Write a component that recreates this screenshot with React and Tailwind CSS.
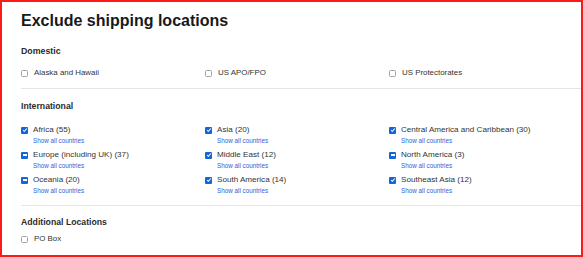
const domestic = ['Alaska and Hawaii', 'US APO/FPO', 'US Protectorates'];

const international = [
  { name: 'Africa (55)', state: 'checked' },
  { name: 'Asia (20)', state: 'checked' },
  { name: 'Central America and Caribbean (30)', state: 'checked' },
  { name: 'Europe (including UK) (37)', state: 'mixed' },
  { name: 'Middle East (12)', state: 'checked' },
  { name: 'North America (3)', state: 'mixed' },
  { name: 'Oceania (20)', state: 'mixed' },
  { name: 'South America (14)', state: 'checked' },
  { name: 'Southeast Asia (12)', state: 'checked' },
];

function Box({ state }) {
  if (state === 'checked') {
    return (
      <span className="w-[7px] h-[7px] rounded-[1px] bg-[#1466d8] flex items-center justify-center shrink-0">
        <svg viewBox="0 0 8 8" className="w-[6px] h-[6px]">
          <path d="M1.5 4.2 L3.2 5.8 L6.5 2" fill="none" stroke="#fff" strokeWidth="1.4" />
        </svg>
      </span>
    );
  }
  if (state === 'mixed') {
    return (
      <span className="w-[7px] h-[7px] rounded-[1px] bg-[#1466d8] flex items-center justify-center shrink-0">
        <span className="w-[4px] h-[1.5px] bg-white" />
      </span>
    );
  }
  return <span className="w-[7px] h-[7px] rounded-[1.5px] border border-[#a3a3a3] bg-white shrink-0" />;
}

export default function App() {
  return (
    <div
      className="w-[583px] h-[257px] border-2 border-[#ff1a1a] overflow-hidden bg-white pl-[19px] text-[#333]"
      style={{ fontFamily: '"Liberation Sans", Arial, sans-serif' }}
    >
      <h1 className="mt-[9px] h-[20px] leading-[20px] text-[16px] font-bold text-[#191919]">
        Exclude shipping locations
      </h1>

      {/* Domestic */}
      <h2 className="mt-[13px] h-[14px] leading-[14px] text-[8.8px] font-bold text-[#2b2b2b]">Domestic</h2>
      <div className="mt-[9px] grid grid-cols-[184px_184px_184px]">
        {domestic.map(name => (
          <label key={name} className="h-[12px] flex items-center gap-[6px] text-[7.9px]">
            <Box state="empty" />
            <span>{name}</span>
          </label>
        ))}
      </div>
      <div className="mt-[9px] border-t border-[#e5e5e5]" />

      {/* International */}
      <h2 className="mt-[10px] h-[14px] leading-[14px] text-[8.7px] font-bold text-[#2b2b2b]">International</h2>
      <div className="mt-[11px] grid grid-cols-[184px_184px_184px] gap-y-[4px]">
        {international.map(item => (
          <div key={item.name} className="flex flex-col">
            <label className="h-[12px] flex items-center gap-[5px] text-[8.1px]">
              <Box state={item.state} />
              <span>{item.name}</span>
            </label>
            <a className="h-[9px] leading-[9px] ml-[12px] text-[6.3px] text-[#2f5fd6]">Show all countries</a>
          </div>
        ))}
      </div>
      <div className="mt-[10px] border-t border-[#e5e5e5]" />

      {/* Additional */}
      <h2 className="mt-[9px] h-[14px] leading-[14px] text-[8.7px] font-bold text-[#2b2b2b]">Additional Locations</h2>
      <label className="mt-[4px] h-[12px] flex items-center gap-[6px] text-[7.9px]">
        <Box state="empty" />
        <span>PO Box</span>
      </label>
      <div className="mt-[10px] border-t border-[#e5e5e5]" />
    </div>
  );
}
